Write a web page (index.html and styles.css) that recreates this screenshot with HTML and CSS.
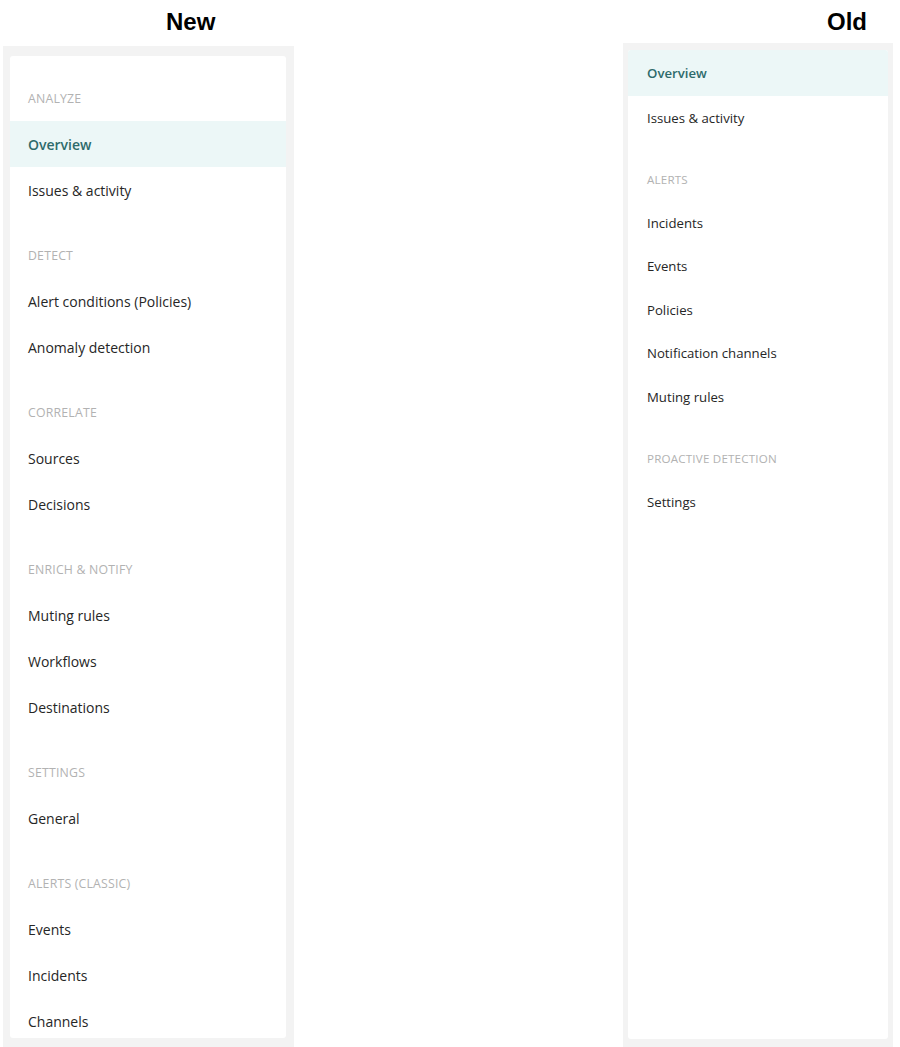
FILE: index.html
```html
<!DOCTYPE html>
<html lang="en">
<head>
<meta charset="utf-8">
<title>Alerts navigation: New vs Old</title>
<link rel="stylesheet" href="styles.css">
</head>
<body>
<div class="compare">
  <section class="col col-new">
    <h2 class="col-title">New</h2>
    <div class="frame">
      <nav class="card">
        <div class="group">
          <div class="group-label">ANALYZE</div>
          <div class="item active">Overview</div>
          <div class="item">Issues &amp; activity</div>
        </div>
        <div class="group">
          <div class="group-label">DETECT</div>
          <div class="item">Alert conditions (Policies)</div>
          <div class="item">Anomaly detection</div>
        </div>
        <div class="group">
          <div class="group-label">CORRELATE</div>
          <div class="item">Sources</div>
          <div class="item">Decisions</div>
        </div>
        <div class="group">
          <div class="group-label">ENRICH &amp; NOTIFY</div>
          <div class="item">Muting rules</div>
          <div class="item">Workflows</div>
          <div class="item">Destinations</div>
        </div>
        <div class="group">
          <div class="group-label">SETTINGS</div>
          <div class="item">General</div>
        </div>
        <div class="group">
          <div class="group-label">ALERTS (CLASSIC)</div>
          <div class="item">Events</div>
          <div class="item">Incidents</div>
          <div class="item">Channels</div>
        </div>
      </nav>
    </div>
  </section>

  <section class="col col-old">
    <h2 class="col-title">Old</h2>
    <div class="frame">
      <nav class="card">
        <div class="group group-first">
          <div class="item active first">Overview</div>
          <div class="item">Issues &amp; activity</div>
        </div>
        <div class="group">
          <div class="group-label">ALERTS</div>
          <div class="item">Incidents</div>
          <div class="item">Events</div>
          <div class="item">Policies</div>
          <div class="item">Notification channels</div>
          <div class="item">Muting rules</div>
        </div>
        <div class="group">
          <div class="group-label">PROACTIVE DETECTION</div>
          <div class="item">Settings</div>
        </div>
      </nav>
    </div>
  </section>
</div>
</body>
</html>
```

FILE: styles.css
```css
* { box-sizing: border-box; }

html, body {
  margin: 0;
  padding: 0;
  background: #ffffff;
  height: 1047px;
  overflow: hidden;
}

body {
  font-family: "Open Sans", "Noto Sans", sans-serif;
  color: #2b2b2b;
}

.compare {
  display: flex;
  justify-content: space-between;
  height: 1047px;
  padding: 0 7px 0 3px;
}

.col {
  display: flex;
  flex-direction: column;
  height: 100%;
}

.col-new {
  width: 291px;
  --row: 46px;
  --gap: 19px;
  --fs: 14px;
  --label-fs: 12.3px;
  --indent: 18px;
}

.col-old {
  width: 270px;
  --row: 43.5px;
  --gap: 18px;
  --fs: 13.2px;
  --label-fs: 11.6px;
  --indent: 19px;
}

.col-title {
  margin: 0;
  font-family: "Liberation Sans", Arial, sans-serif;
  font-weight: 700;
  font-size: 24px;
  line-height: 24px;
  color: #000000;
  flex: none;
}

.col-new .col-title {
  height: 46px;
  padding: 10px 0 0 163px;
}

.col-old .col-title {
  height: 43px;
  padding: 10px 0 0 204px;
}

.frame {
  flex: 1;
  background: #f3f3f3;
  min-height: 0;
  display: flex;
}

.col-new .frame { padding: 10px 8px 9px 7px; }
.col-old .frame { padding: 7px 5px 8px 5px; }

.card {
  flex: 1;
  background: #ffffff;
  border-radius: 3px;
  overflow: hidden;
}

.group { padding-top: var(--gap); }
.group-first { padding-top: 0; }

.group-label,
.item {
  height: var(--row);
  display: flex;
  align-items: center;
  padding-left: var(--indent);
  white-space: nowrap;
}

.group-label {
  font-size: var(--label-fs);
  letter-spacing: 0.2px;
  color: #b2b2b2;
}

.item {
  font-size: var(--fs);
  color: #262626;
}

.item.active {
  background: #ecf7f7;
  color: #2e6b6b;
  font-weight: 600;
}

.item.first { height: 46px; }
```
